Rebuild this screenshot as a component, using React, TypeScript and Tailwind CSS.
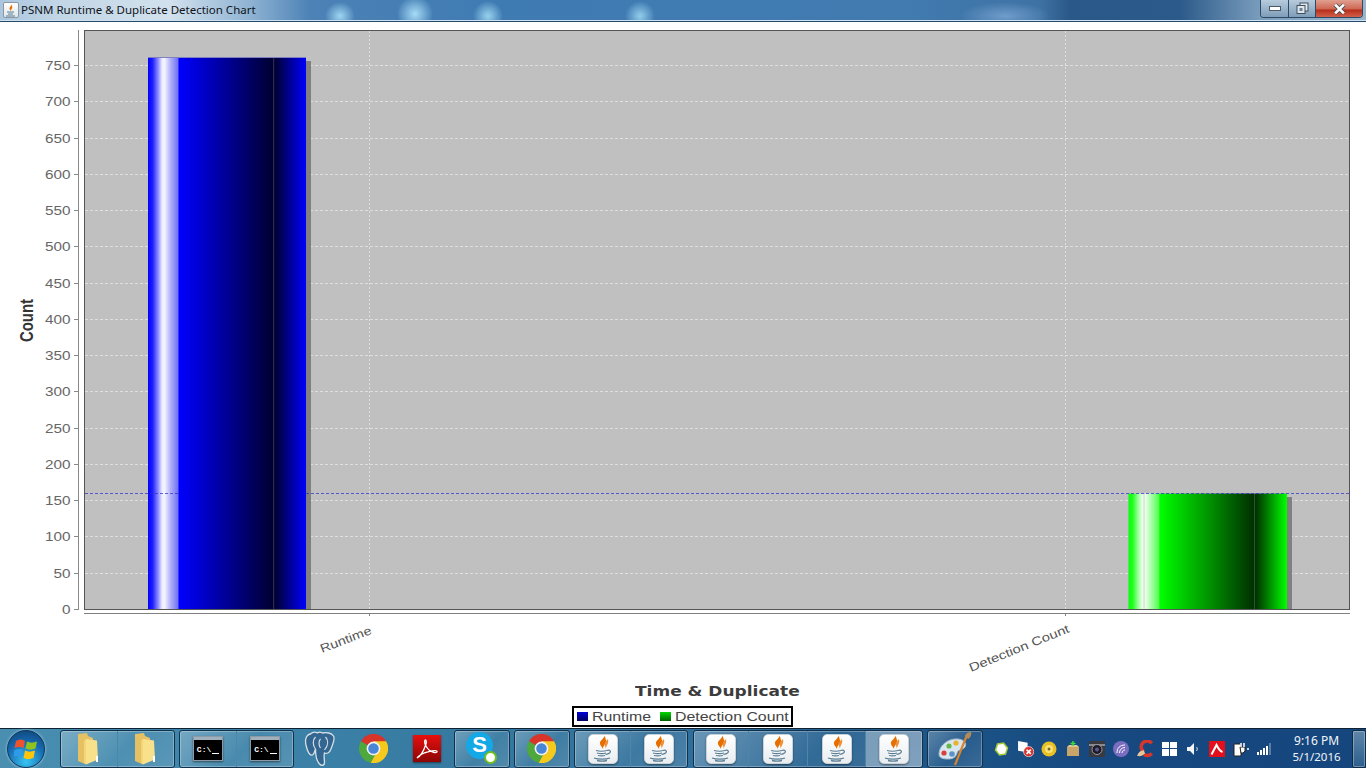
const ticks = [750, 700, 650, 600, 550, 500, 450, 400, 350, 300, 250, 200, 150, 100, 50, 0];
const tickY = (v: number) => 609 - (v * 544) / 750;

const Java = () => (
  <div className="w-[30px] h-[30px] rounded-[5px] bg-gradient-to-b from-white to-[#e9edf0] border border-[#c9d2d8] shadow-[0_1px_2px_rgba(0,0,0,0.45)] flex items-center justify-center">
    <svg width="24" height="28" viewBox="0 0 24 28">
      <path d="M13 0c2 3-5 5-4 9 .4 1.500 2 3 3 5-.5-3 3.500-5 3-8.500C14.700 3.500 14 1.500 13 0z" fill="#e76f00" />
      <path d="M17 4c-2 2-4 3.500-3 6.500.3 1 .6 2 .6 3 1-3 3.400-5 2.400-9.500z" fill="#f0913a" />
      <path d="M5 15.500c3 .8 8 .8 11 0M6 18c3 .7 6.500.7 9 0M7 20.500c2 .5 5 .5 7 0" stroke="#5b7f95" strokeWidth="1.200" fill="none" />
      <path d="M16 15.500c3-1 4.500 1 2.500 2.500-1 .8-2.500 1.200-4 1.500" stroke="#5b7f95" strokeWidth="1.200" fill="none" />
      <path d="M3 23c4 1.500 12 1.500 16 0M6 25.500c3 .7 7 .7 10 0" stroke="#5b7f95" strokeWidth="1.300" fill="none" />
    </svg>
  </div>
);

const Folder = () => (
  <svg width="24" height="33" viewBox="0 0 24 33">
    <path d="M1 2l9-1 1 3 5 2v20l-8 6-7-3z" fill="#e6c163" />
    <path d="M9 7l11 1.500 1 19-12 5z" fill="#f9e08a" />
    <path d="M9 7l-2 2 0 22 2 1.500z" fill="#f3d678" />
    <rect x="19" y="24" width="2" height="6" fill="#fff" />
  </svg>
);

const Cmd = () => (
  <div className="w-[30px] h-[25px] border border-[#8d9aa5] bg-black flex flex-col shadow-[0_1px_2px_rgba(0,0,0,0.5)]">
    <div className="h-[3px] bg-[#9fb0bd] shrink-0" />
    <div className="flex-1 flex items-center pl-[3px] text-white font-['Liberation_Mono',monospace] text-[8px] font-bold leading-none">
      C:\<span className="ml-px mt-[6px] w-[7px] h-px bg-white" />
    </div>
  </div>
);

const Chrome = () => (
  <svg width="29" height="29" viewBox="0 0 32 32">
    <path d="M16 16L2.100 8A16 16 0 0 1 29.900 8z" fill="#d8342a" />
    <path d="M2.100 8A16 16 0 0 0 13 31.700L20 19z" fill="#4ea83c" />
    <path d="M29.900 8H16l4 11-7 12.700A16 16 0 0 0 29.900 8z" fill="#f6c91d" />
    <circle cx="16" cy="16" r="7.600" fill="#f2f2f2" />
    <circle cx="16" cy="16" r="5.800" fill="#4a86d8" />
  </svg>
);

const Acrobat = () => (
  <div className="w-[28px] h-[27px] bg-gradient-to-b from-[#e8100e] to-[#8c0606] shadow-[0_1px_2px_rgba(0,0,0,0.5)] flex items-center justify-center">
    <svg width="24" height="22" viewBox="0 0 24 22">
      <path d="M2 20c4-2 7-8 9-14 .6-2 .3-4-.6-4-1 0-.9 3 0 5 2 4 5 7 9 7.500 2 .2 3-.6 2.500-1.300-.8-1-5-.5-9 .6C8 15 4 17.500 2 20z" fill="none" stroke="#fff" strokeWidth="1.300" />
    </svg>
  </div>
);

const Skype = () => (
  <div className="relative w-[30px] h-[30px] mt-[-4px] mr-[2px]">
    <div className="w-[27px] h-[27px] rounded-full bg-[#14a8e6] flex items-center justify-center text-white font-['Liberation_Sans',sans-serif] font-bold text-[22px] leading-none">
      S
    </div>
    <div className="absolute right-[-1px] bottom-[-2px] w-[13px] h-[13px] rounded-full bg-white border-2 border-[#6fbf1f]" />
  </div>
);

const Elephant = () => (
  <svg width="35" height="36" viewBox="0 0 34 36">
    <path d="M7 3C2 4 1 10 3 16c1 4 3 9 6 8 2-1 2-4 3-6 0 5 1 12 4 15 2 2 5 2 5-2 0-3-1-6 0-9 2 1 5 0 6-3 2-5 5-11 3-14-2-3-7-4-11-3-2-1-4-1-5 0-2-1-5-1-7 1z" fill="#336791" stroke="#d8e0e6" strokeWidth="1.300" />
    <path d="M12 6c-3 3-3 8 0 12M22 6c3 3 3 8-1 13M17 8c-2 2-2 6 0 9" stroke="#d8e0e6" strokeWidth="1.200" fill="none" />
  </svg>
);

const Palette = () => (
  <svg width="34" height="36" viewBox="0 0 34 36">
    <path d="M1 23C1 14 11 7 20 8c6 .7 9 4 7 8-2 3-7 2-8 6-1 4-4 6-9 6-5 0-9-1-9-5z" fill="#d8e6f0" stroke="#a8bccb" />
    <circle cx="6" cy="22" r="2.600" fill="#d8403a" />
    <circle cx="11" cy="15" r="2.600" fill="#63b84a" />
    <circle cx="18" cy="12" r="2.600" fill="#e8b32a" />
    <circle cx="14" cy="23" r="2.800" fill="#5b93c9" />
    <path d="M29 4L17 34" stroke="#d9832b" strokeWidth="2.200" />
    <path d="M27 5c1-3 3-4 6-4 1 3-1 6-3 7z" fill="#b08a5a" />
  </svg>
);

const WinOrb = () => (
  <div className="w-[38px] h-[38px] rounded-full border border-[#123a5c] bg-[radial-gradient(circle_at_50%_85%,#37c5f2,#1769b0_55%,#0d3f70)] shadow-[0_0_3px_rgba(190,230,255,0.8)] flex items-center justify-center">
    <svg width="25" height="23" viewBox="0 0 25 23">
      <path d="M2 4c3-2 6-2 9 0l-1.500 7c-3-1.500-6-1.500-9 0z" fill="#f0532c" />
      <path d="M13 4.500c3 1.500 6 1.500 10 0l-1.500 7c-3 1.500-7 1.500-10 0z" fill="#8fc31f" />
      <path d="M.5 13c3-1.500 6-1.500 8.500 0l-1.500 7c-3-1.500-6-1.500-8.500 0z" fill="#2f9be8" />
      <path d="M11 13.500c3 1.500 6 1.500 10 0L19.500 21c-4 1.500-7 1.500-10 0z" fill="#fdc50b" />
    </svg>
  </div>
);

const Btn = ({ children, w, active }: { children: React.ReactNode; w: string; active?: boolean }) => (
  <div className={`${w} h-full flex items-center justify-center border-r border-r-[#4f86a8] last:border-r-0 ${active ? "bg-white/35" : ""}`}>
    {children}
  </div>
);

const Group = ({ children, className }: { children: React.ReactNode; className: string }) => (
  <div className={`${className} h-[38px] flex rounded-[3px] border border-[#10304c] shadow-[inset_0_0_0_1px_rgba(255,255,255,0.28)] bg-[linear-gradient(135deg,rgba(255,255,255,0.28),rgba(255,255,255,0.06)_55%,rgba(255,255,255,0.14))] overflow-hidden`}>
    {children}
  </div>
);

const Tray = ({ children }: { children: React.ReactNode }) => (
  <div className="w-6 h-full flex items-center justify-center">{children}</div>
);

const TrayIcons = () => (
  <>
    <Tray>
      <svg width="15" height="14" viewBox="0 0 14 14"><path d="M3 2l6-1 4 5-2 6-6 1-4-5z" fill="#fff" stroke="#a5c934" strokeWidth="1.500" /></svg>
    </Tray>
    <Tray>
      <svg width="17" height="17" viewBox="0 0 16 16">
        <path d="M1 1l9 1.500v9L1 10z" fill="#fff" />
        <circle cx="11" cy="11" r="4.800" fill="#d8322c" stroke="#fff" strokeWidth="0.600" />
        <path d="M9 9l4 4M13 9l-4 4" stroke="#fff" strokeWidth="1.500" />
      </svg>
    </Tray>
    <Tray>
      <svg width="16" height="16" viewBox="0 0 16 16">
        <circle cx="8" cy="8" r="7.500" fill="#e9c021" />
        <circle cx="8" cy="8" r="4" fill="#f7e27a" />
        <circle cx="8" cy="8" r="1.500" fill="#7a6a20" />
      </svg>
    </Tray>
    <Tray>
      <svg width="14" height="16" viewBox="0 0 14 16">
        <rect x="1" y="6" width="12" height="9" fill="#c9a56a" />
        <path d="M1 6l2-2h8l2 2z" fill="#e0c592" />
        <path d="M7 0v5M4.500 2.500h5" stroke="#3ddc3d" strokeWidth="1.500" />
      </svg>
    </Tray>
    <Tray>
      <svg width="16" height="16" viewBox="0 0 16 16">
        <rect width="16" height="16" rx="1" fill="#3a3a3e" />
        <rect y="3" width="16" height="2" fill="#8a8a8e" />
        <circle cx="8" cy="8.500" r="5" fill="#1c1c28" stroke="#9a9aa8" />
        <circle cx="8" cy="8.500" r="2" fill="#5a5a90" />
      </svg>
    </Tray>
    <Tray>
      <svg width="16" height="16" viewBox="0 0 16 16">
        <circle cx="8" cy="8" r="8" fill="#7a6cc0" />
        <path d="M4 12c0-5 3-8 8-8M6.500 12c0-3 2-5.500 5.500-5.500M9 12c0-1.500 1-3 3-3" stroke="#fff" fill="none" />
      </svg>
    </Tray>
    <Tray>
      <svg width="18" height="18" viewBox="0 0 16 16">
        <path d="M14 3c-2-3-7-3-9 1-1 3 0 5 2 6" stroke="#d8362c" strokeWidth="3" fill="none" />
        <path d="M14 12c-2 2-5 2-7 1" stroke="#d8362c" strokeWidth="3" fill="none" />
        <path d="M1 14c1-3 3-5 6-5l1 3c-2 2-5 3-7 2z" fill="#e8c79a" />
      </svg>
    </Tray>
    <Tray>
      <div className="grid grid-cols-2 gap-px w-[15px] h-[14px]">
        <div className="bg-white" />
        <div className="bg-white" />
        <div className="bg-white" />
        <div className="bg-white" />
      </div>
    </Tray>
    <Tray>
      <svg width="14" height="14" viewBox="0 0 14 14">
        <path d="M1 5h3l4-4v12l-4-4H1z" fill="#f2f4f6" />
        <path d="M10.500 5c1 1.200 1 2.800 0 4" stroke="#d5dde4" fill="none" />
      </svg>
    </Tray>
    <Tray>
      <div className="w-4 h-4 bg-[#e3101b] flex items-center justify-center">
        <svg width="14" height="14" viewBox="0 0 14 14">
          <path d="M1.500 12.500L6.500 3c1.500 3 3 6 6 7" stroke="#fff" strokeWidth="2" fill="none" />
        </svg>
      </div>
    </Tray>
    <Tray>
      <svg width="16" height="16" viewBox="0 0 16 16">
        <path d="M1 3h7v12H1z" fill="#fff" stroke="#222" />
        <path d="M7 6h5v4l-2 2H8z" fill="#fff" stroke="#222" />
        <path d="M8 2v4M11 2v4M14 8h2" stroke="#fff" strokeWidth="1.500" />
      </svg>
    </Tray>
    <Tray>
      <svg width="16" height="12" viewBox="0 0 16 12">
        <rect x="0" y="9" width="2" height="3" fill="#fff" />
        <rect x="3" y="7" width="2" height="5" fill="#fff" />
        <rect x="6" y="5" width="2" height="7" fill="#fff" />
        <rect x="9" y="3" width="2" height="9" fill="#fff" />
        <rect x="12" y="0" width="2" height="12" fill="#5a7ea0" />
      </svg>
    </Tray>
  </>
);

const Chart = () => (
  <svg width="1366" height="660" viewBox="0 22 1366 660" className="block shrink-0" fontFamily="'Liberation Sans', sans-serif">
    <defs>
      <linearGradient id="blueBar" x1="148" x2="306" y1="0" y2="0" gradientUnits="userSpaceOnUse">
        <stop offset="0" stopColor="#0000ff" />
        <stop offset="0.03" stopColor="#2020ff" />
        <stop offset="0.065" stopColor="#9090ff" />
        <stop offset="0.09" stopColor="#eeeeff" />
        <stop offset="0.105" stopColor="#f4f4ff" />
        <stop offset="0.14" stopColor="#b4b4f8" />
        <stop offset="0.19" stopColor="#7070f4" />
        <stop offset="0.196" stopColor="#0000ff" />
        <stop offset="0.79" stopColor="#000030" />
        <stop offset="0.795" stopColor="#30305a" />
        <stop offset="0.802" stopColor="#000030" />
        <stop offset="1" stopColor="#0000ff" />
      </linearGradient>
      <linearGradient id="greenBar" x1="1128" x2="1287" y1="0" y2="0" gradientUnits="userSpaceOnUse">
        <stop offset="0" stopColor="#00ff00" />
        <stop offset="0.03" stopColor="#20ff20" />
        <stop offset="0.065" stopColor="#a0ffa0" />
        <stop offset="0.095" stopColor="#f4fff4" />
        <stop offset="0.1" stopColor="#c8d8c8" />
        <stop offset="0.108" stopColor="#eeffee" />
        <stop offset="0.15" stopColor="#a0ffa0" />
        <stop offset="0.195" stopColor="#50ff50" />
        <stop offset="0.2" stopColor="#00ff00" />
        <stop offset="0.79" stopColor="#003000" />
        <stop offset="0.795" stopColor="#305a30" />
        <stop offset="0.802" stopColor="#003000" />
        <stop offset="1" stopColor="#00ff00" />
      </linearGradient>
    </defs>

    <rect x="84.500" y="30.500" width="1265" height="579" fill="#c0c0c0" stroke="#555" />

    {ticks
      .filter((v) => v > 0)
      .map((v) => (
        <line key={v} x1="85" x2="1349" y1={Math.round(tickY(v)) + 0.5} y2={Math.round(tickY(v)) + 0.5} stroke="#dedede" strokeDasharray="3 2" />
      ))}
    <line x1="369.500" x2="369.500" y1="31" y2="609" stroke="#dedede" strokeDasharray="2 2" />
    <line x1="1065.500" x2="1065.500" y1="31" y2="609" stroke="#dedede" strokeDasharray="2 2" />

    <rect x="306" y="61" width="5" height="548" fill="#808080" />
    <rect x="148" y="57.500" width="158" height="551.500" fill="url(#blueBar)" />
    <line x1="148" x2="306" y1="57.500" y2="57.500" stroke="#8080c0" />
    <rect x="1287" y="497" width="5" height="112" fill="#808080" />
    <rect x="1128.500" y="493.500" width="158.500" height="115.500" fill="url(#greenBar)" />

    {/* marker does not show on the solid part of the blue bar */}
    <line x1="85" x2="178" y1="493.500" y2="493.500" stroke="#2a2ad0" strokeOpacity="0.7" strokeDasharray="3 2" />
    <line x1="306" x2="1349" y1="493.500" y2="493.500" stroke="#2a2ad0" strokeOpacity="0.7" strokeDasharray="3 2" />

    {/* axes */}
    <line x1="78.500" x2="78.500" y1="30" y2="610" stroke="#8a8a8a" />
    <line x1="84" x2="1350" y1="613.500" y2="613.500" stroke="#808080" />
    <line x1="369.500" x2="369.500" y1="614" y2="616" stroke="#808080" />
    <line x1="1065.500" x2="1065.500" y1="614" y2="616" stroke="#808080" />
    {ticks.map((v) => (
      <g key={v}>
        <line x1="74" x2="78" y1={Math.round(tickY(v)) + 0.5} y2={Math.round(tickY(v)) + 0.5} stroke="#8a8a8a" />
        <text
          x="70.500"
          y={Math.round(tickY(v)) + 4.5}
          textAnchor="end"
          fontSize="12"
          fill="#666"
          textLength={v >= 100 ? 25.5 : v > 0 ? 17 : 8.5}
          lengthAdjust="spacingAndGlyphs"
        >
          {v}
        </text>
      </g>
    ))}

    <text
      transform="translate(33 342) rotate(-90)"
      fontSize="19"
      fontWeight="bold"
      fill="#333"
      textLength="43"
      lengthAdjust="spacingAndGlyphs"
    >
      Count
    </text>
    <text transform="translate(322 653) rotate(-21)" fontSize="12" fill="#555" textLength="54" lengthAdjust="spacingAndGlyphs">
      Runtime
    </text>
    <text transform="translate(971 672) rotate(-22)" fontSize="12" fill="#555" textLength="107" lengthAdjust="spacingAndGlyphs">
      Detection Count
    </text>
  </svg>
);

const Swatch = ({ className }: { className: string }) => (
  <div className={`w-[11px] h-[9px] ${className}`} />
);

export default function App() {
  return (
    <div className="w-[1366px] h-[768px] flex flex-col overflow-hidden bg-white">
      {/* Title bar */}
      <div className="h-[22px] shrink-0 flex items-start border-b border-b-[#254a6c] shadow-[inset_0_-1px_0_#cfe0ee] bg-[radial-gradient(ellipse_15px_14px_at_340px_16px,#9dd6f2,transparent),radial-gradient(ellipse_18px_18px_at_415px_14px,#a6dcf6,transparent),radial-gradient(ellipse_15px_15px_at_488px_16px,#98d2ef,transparent),radial-gradient(ellipse_15px_15px_at_640px_16px,#92cdec,transparent),radial-gradient(ellipse_45px_14px_at_1005px_16px,#6f9ccb,transparent),linear-gradient(90deg,#aac6de_0,#c2d6e6_60px,#d2e1ed_170px,#8fb3d3_250px,#4c82b6_310px,#3f7bb3_500px,#417bb0_900px,#3f72a4_1040px,#2a5888_1070px,#2c5a8a_1180px,#7b9ebd_1262px,#9cb5ca_1366px)]">
        <div className="w-[16px] h-[16px] mt-[2px] ml-[3px] bg-gradient-to-b from-white to-[#dfe5ea] border border-[#8b98a3] rounded-[2px] flex items-center justify-center">
          <svg width="12" height="13" viewBox="0 0 12 13">
            <path d="M6 0c1 2-2 3-1.500 5 .3.8 1 1.300 1.500 2 0-2 2-3 1-5z" fill="#e76f00" />
            <path d="M2 8h7M3 10h5M1 12h9" stroke="#5b7f95" />
          </svg>
        </div>
        <span className="ml-[2px] mt-[2px] text-[11.500px] leading-[16px] text-[#10131a] font-['Noto_Sans',sans-serif] whitespace-nowrap">
          PSNM Runtime &amp; Duplicate Detection Chart
        </span>
        <div className="ml-auto mr-[3px] h-[18px] flex rounded-b-[4px] border border-t-0 border-[#2b4a66] shadow-[inset_0_0_0_1px_rgba(255,255,255,0.35)] overflow-hidden">
          <div className="w-[28px] bg-gradient-to-b from-[#b7cbdc] to-[#7f9db8] border-r border-r-[#2b4a66] flex items-center justify-center">
            <div className="w-[12px] h-[5px] bg-white border border-[#4a5a68]" />
          </div>
          <div className="w-[27px] bg-gradient-to-b from-[#b7cbdc] to-[#7f9db8] border-r border-r-[#2b4a66] flex items-center justify-center">
            <svg width="13" height="13" viewBox="0 0 13 12">
              <rect x="4" y="0.500" width="8" height="8" fill="#dfe6ec" stroke="#40505e" />
              <rect x="1" y="3" width="8" height="8" fill="#dfe6ec" stroke="#40505e" />
              <rect x="3.500" y="5.500" width="3" height="3" fill="#6a8299" />
            </svg>
          </div>
          <div className="w-[46px] bg-[linear-gradient(180deg,#e0a090,#cf6a56_50%,#b8301c_60%,#d0604a)] flex items-center justify-center">
            <svg width="13" height="12" viewBox="0 0 12 11">
              <path d="M2 1.500l8 8M10 1.500l-8 8" stroke="#4a4f55" strokeWidth="4" />
              <path d="M2 1.500l8 8M10 1.500l-8 8" stroke="#fff" strokeWidth="2.500" />
            </svg>
          </div>
        </div>
      </div>

      {/* Chart window body */}
      <div className="h-[706px] shrink-0 flex flex-col">
        <Chart />
        <div className="h-[22px] ml-[635px] w-[164px] flex items-center pb-[4px]">
          <span className="origin-left scale-x-[1.26] text-[13.500px] font-bold text-[#3c3c3c] whitespace-nowrap font-['DejaVu_Sans',sans-serif]">
            Time &amp; Duplicate
          </span>
        </div>
        <div className="mt-[2px] ml-[572px] w-[221px] h-[21px] border-2 border-black flex items-center pl-[3px] text-[13px] text-[#444] font-['Liberation_Sans',sans-serif] whitespace-nowrap">
          <Swatch className="bg-gradient-to-b from-[#0000d8] to-[#000060]" />
          <span className="ml-[4px] w-[68px] origin-left scale-x-[1.22]">Runtime</span>
          <Swatch className="bg-gradient-to-b from-[#00d800] to-[#006000]" />
          <span className="ml-[4px] w-[110px] origin-left scale-x-[1.22]">Detection Count</span>
        </div>
        <div className="h-px" />
      </div>

      {/* Taskbar */}
      <div className="h-[40px] shrink-0 flex items-center border-t border-t-[#0f2233] bg-[linear-gradient(90deg,#4a8fb0_0,#3f86ab_180px,#35789f_500px,#2f6d9a_700px,#1c5688_930px,#17487f_1100px,#15467d_1366px)]">
        <div className="w-[60px] h-full flex items-center justify-center pr-[7px]">
          <WinOrb />
        </div>
        <Group className="w-[115px]">
          <Btn w="flex-1"><Folder /></Btn>
          <Btn w="flex-1"><Folder /></Btn>
        </Group>
        <Group className="ml-[4px] w-[116px]">
          <Btn w="flex-1"><Cmd /></Btn>
          <Btn w="flex-1"><Cmd /></Btn>
        </Group>
        <div className="w-[53px] flex justify-center"><Elephant /></div>
        <div className="w-[53px] flex justify-center"><Chrome /></div>
        <div className="w-[53px] flex justify-center"><Acrobat /></div>
        <Group className="ml-px w-[56px] items-center justify-center">
          <Skype />
        </Group>
        <Group className="ml-[4px] w-[56px] items-center justify-center">
          <Chrome />
        </Group>
        <Group className="ml-[4px] w-[114px]">
          <Btn w="flex-1"><Java /></Btn>
          <Btn w="flex-1"><Java /></Btn>
        </Group>
        <Group className="ml-[5px] w-[231px]">
          <Btn w="w-[56px]"><Java /></Btn>
          <Btn w="w-[60px]"><Java /></Btn>
          <Btn w="w-[58px]"><Java /></Btn>
          <Btn w="w-[57px]" active><Java /></Btn>
        </Group>
        <Group className="ml-[4px] w-[56px] items-center justify-center">
          <Palette />
        </Group>
        <div className="ml-[6px] h-full flex">
          <TrayIcons />
        </div>
        <div className="w-[75px] pl-[4px] text-center text-[12px] leading-[16px] text-[#f2f6fa] font-['Noto_Sans',sans-serif]">
          <div>9:16 PM</div>
          <div className="text-[11.500px]">5/1/2016</div>
        </div>
        <div className="w-[14px] h-[38px] border border-[#0f2a45] rounded-[2px] shadow-[inset_0_0_0_1px_rgba(255,255,255,0.3)] bg-gradient-to-b from-[#5f86a8] to-[#2c5e8e]" />
      </div>
    </div>
  );
}
